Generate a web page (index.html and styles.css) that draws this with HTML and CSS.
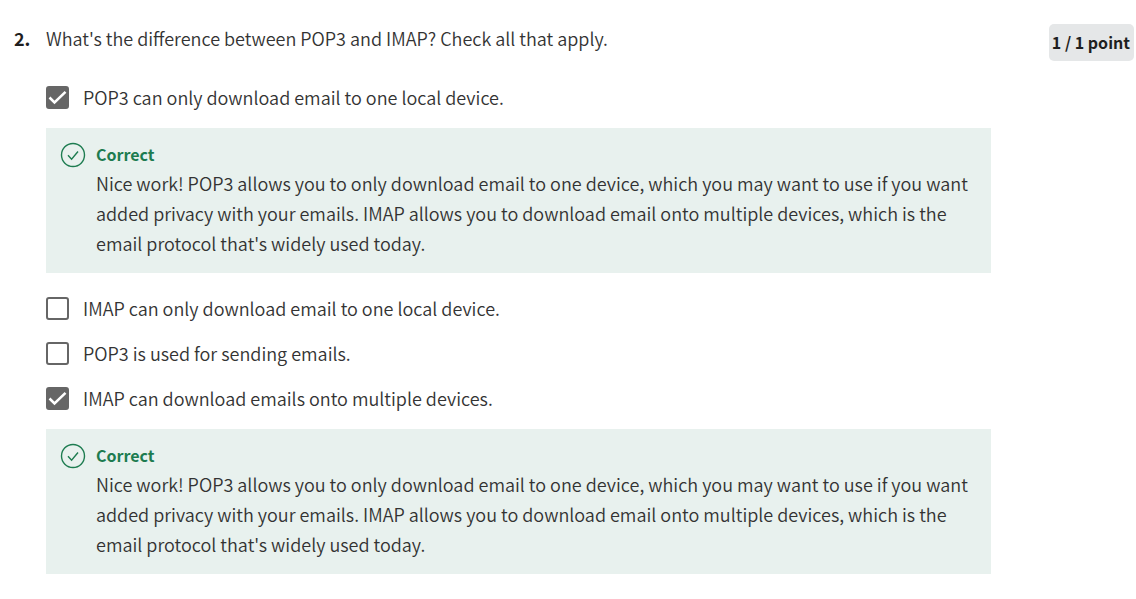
FILE: index.html
```
<!DOCTYPE html>
<html lang="en">
<head>
<meta charset="utf-8">
<title>Quiz question 2</title>
<meta name="viewport" content="width=device-width, initial-scale=1">
<link rel="stylesheet" href="styles.css">
</head>
<body>
<main class="question">
  <div class="number">2.</div>
  <div class="content">
    <h1 class="prompt" id="prompt">What's the difference between POP3 and IMAP? Check all that apply.</h1>
    <div class="options" role="group" aria-labelledby="prompt">
      <label class="option" for="a1"><input class="box" type="checkbox" id="a1" checked><span>POP3 can only download email to one local device.</span></label>
      <section class="feedback">
        <svg class="status" viewBox="0 0 26 26" aria-hidden="true"><circle cx="13" cy="13" r="11.5"/><path d="M8 13.2l3.6 4L18 9.5"/></svg>
        <div class="feedback-text">
          <h2 class="verdict">Correct</h2>
          <p class="explanation">Nice work! POP3 allows you to only download email to one device, which you may want to use if you want added privacy with your emails. IMAP allows you to download email onto multiple devices, which is the email protocol that's widely used today.</p>
        </div>
      </section>
      <label class="option" for="a2"><input class="box" type="checkbox" id="a2"><span>IMAP can only download email to one local device.</span></label>
      <label class="option" for="a3"><input class="box" type="checkbox" id="a3"><span>POP3 is used for sending emails.</span></label>
      <label class="option" for="a4"><input class="box" type="checkbox" id="a4" checked><span>IMAP can download emails onto multiple devices.</span></label>
      <section class="feedback">
        <svg class="status" viewBox="0 0 26 26" aria-hidden="true"><circle cx="13" cy="13" r="11.5"/><path d="M8 13.2l3.6 4L18 9.5"/></svg>
        <div class="feedback-text">
          <h2 class="verdict">Correct</h2>
          <p class="explanation">Nice work! POP3 allows you to only download email to one device, which you may want to use if you want added privacy with your emails. IMAP allows you to download email onto multiple devices, which is the email protocol that's widely used today.</p>
        </div>
      </section>
    </div>
  </div>
  <div class="points">1 / 1 point</div>
</main>
</body>
</html>
```
FILE: styles.css
```
* {
  box-sizing: border-box;
}

body {
  margin: 0;
  background: #fff;
  color: #333;
  font-family: "Noto Sans CJK SC", "Noto Sans", sans-serif;
  font-size: 18px;
  font-weight: 350;
  line-height: 30px;
}

h1, h2, p {
  margin: 0;
  font-size: inherit;
  font-weight: inherit;
}

.question {
  display: flex;
  align-items: flex-start;
  padding: 23px 2px 24px 14px;
}

.number {
  flex: 0 0 32px;
  color: #1f1f1f;
  font-weight: 700;
}

.content {
  flex: 1;
}

.options {
  display: grid;
  gap: 15px;
  margin-top: 29px;
}

.option {
  display: flex;
  align-items: center;
  gap: 14px;
}

.box {
  appearance: none;
  flex: none;
  width: 23px;
  height: 23px;
  margin: 0;
  border: 2px solid #666;
  border-radius: 3px;
  background: #fff;
}

.box:checked {
  background: #666 url("data:image/svg+xml,%3Csvg xmlns='http://www.w3.org/2000/svg' viewBox='0 0 23 23'%3E%3Cpath d='M3.5 11.5l5 5L19.5 5.8' fill='none' stroke='white' stroke-width='2.5'/%3E%3C/svg%3E") center / 23px 23px no-repeat;
  background-origin: border-box;
}

.feedback {
  display: flex;
  gap: 10px;
  margin: 1px 0 5px;
  padding: 13px 10px 15px 14px;
  background: #e8f1ee;
}

.status {
  flex: none;
  width: 26px;
  height: 26px;
  margin-top: 1px;
  fill: none;
  stroke: #1d7c50;
  stroke-width: 1.4;
}

.verdict {
  color: #1d7c50;
  font-size: 16px;
  font-weight: 600;
  line-height: 27px;
}

.points {
  flex: none;
  margin-top: 1px;
  margin-left: 58px;
  padding: 3px 4px 4px 3px;
  border-radius: 5px;
  background: #e5e7e8;
  color: #1f1f1f;
  font-size: 16px;
  font-weight: 600;
}
```
